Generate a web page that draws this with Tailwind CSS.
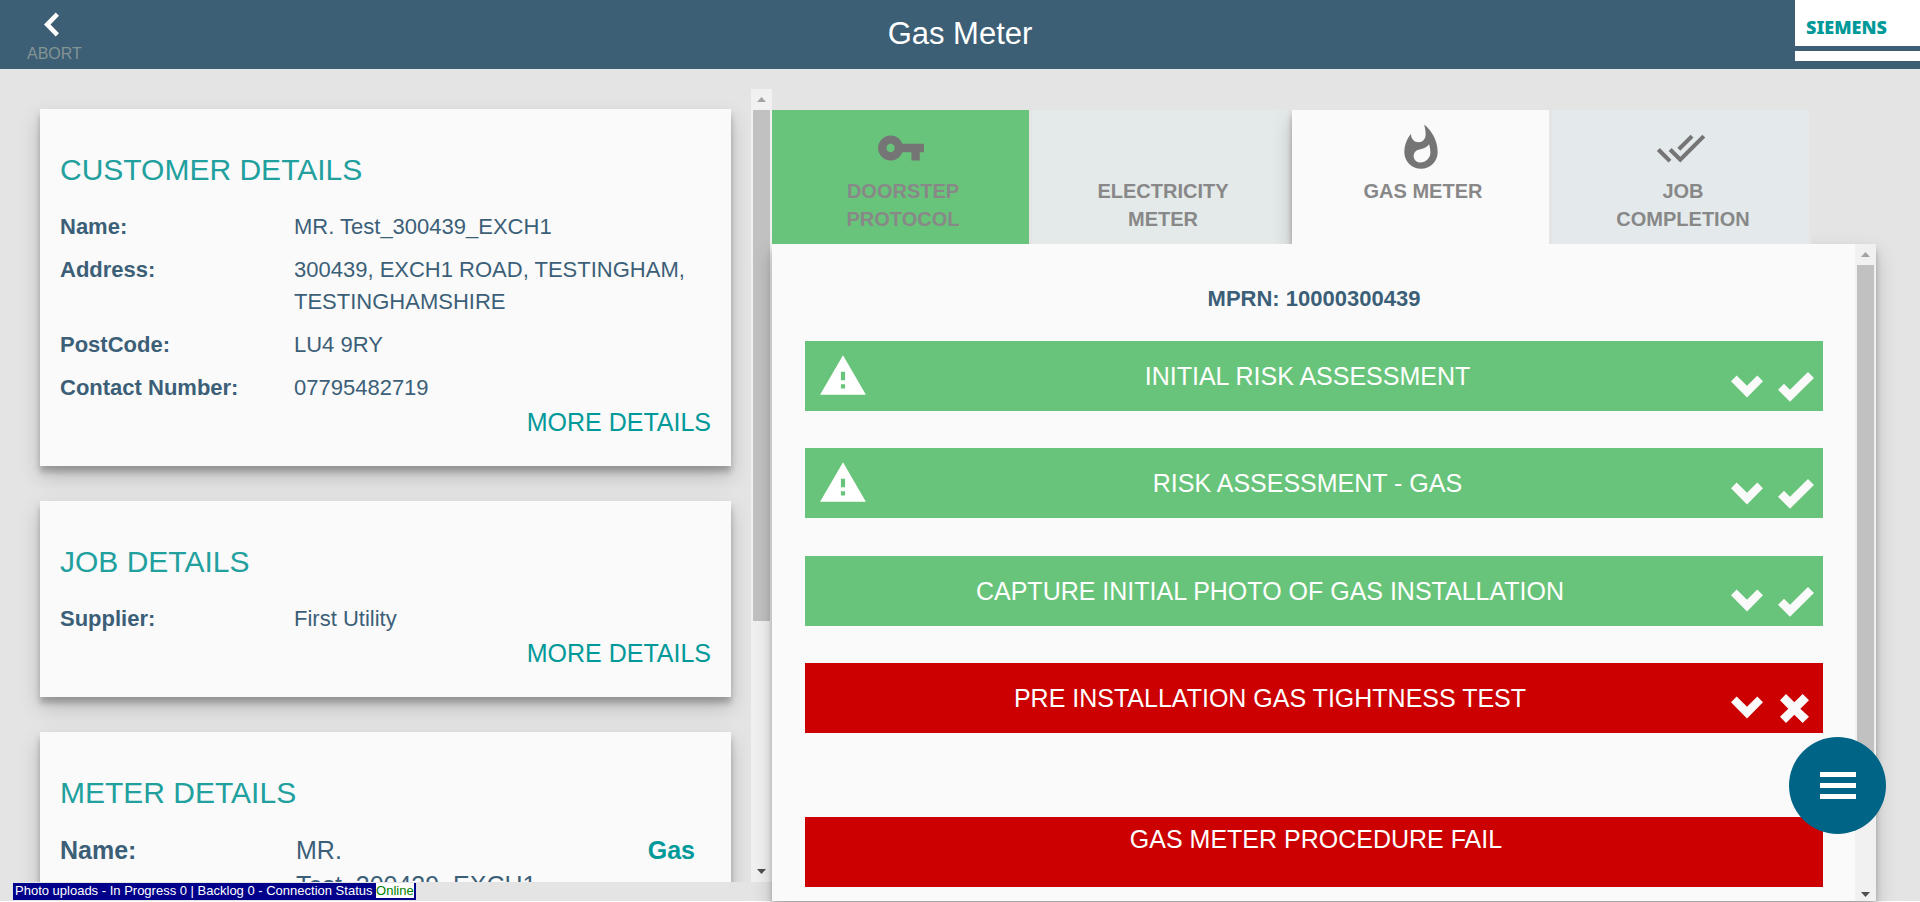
<!DOCTYPE html>
<html lang="en">
<head>
<meta charset="utf-8">
<meta name="viewport" content="width=device-width, initial-scale=1">
<title>Gas Meter</title>
<script src="https://cdn.jsdelivr.net/npm/@tailwindcss/browser@4"></script>
</head>
<body class="bg-white font-['Liberation_Sans',Arial,sans-serif] text-[#3c5f78]">
<svg class="hidden" aria-hidden="true">
  <symbol id="warning" viewBox="0 0 24 24"><path d="M1 21h22L12 2 1 21zm12-3h-2v-2h2v2zm0-4h-2v-4h2v4z"/></symbol>
  <symbol id="chevron" viewBox="155 131 96 68"><path d="M155 149L172 132 203 163 234 132 251 149 203 198z"/></symbol>
  <symbol id="tick" viewBox="294 126 108 90"><path d="M294 179L312 161 330 179 384 126 402 144 330 215z"/></symbol>
  <symbol id="cross" viewBox="300 162 87 87"><path d="M318 162L343 187 368 162 387 181 361 206 387 230 368 249 343 224 318 249 300 230 325 206 300 181z"/></symbol>
  <symbol id="up" viewBox="0 0 9 5"><path d="M4.500 0L9 5H0z"/></symbol>
  <symbol id="down" viewBox="0 0 9 5"><path d="M4.500 5L0 0H9z"/></symbol>
</svg>

<div class="flex h-screen flex-col overflow-hidden pb-px">
  <div class="flex min-h-0 flex-1 flex-col bg-[#e4e4e4]">
    <header class="grid h-[69px] shrink-0 grid-cols-3 bg-[#3c5f76]">
      <button type="button" class="flex flex-col items-center gap-[7px] justify-self-start pt-3 pl-[27px] text-[16px] leading-5 text-[#849494]">
        <svg class="mr-[5px] h-[25px] w-[15px] fill-white" viewBox="132 35 46 74" aria-hidden="true"><path d="M168 35L178 45 152 72 178 99 168 109 132 72z"/></svg>
        ABORT
      </button>
      <h1 class="self-center pb-[2px] text-center text-[31px] leading-10 text-white">Gas Meter</h1>
      <div class="flex w-[125px] flex-col gap-[5px] justify-self-end">
        <div class="flex h-[46px] items-center bg-white pt-2 pl-[11px] font-['Noto_Sans','Open_Sans',sans-serif] text-[18px] leading-6 font-black text-[#009999]">SIEMENS</div>
        <div class="h-[10px] bg-white"></div>
      </div>
    </header>

    <div class="flex min-h-0 flex-1">
      <aside class="mt-5 mb-[19px] flex min-w-0 flex-[772] overflow-hidden">
        <div class="flex min-w-0 flex-1 flex-col gap-[35px] overflow-hidden pt-5 pr-5 pl-10">
          <section class="shrink-0 bg-[#fafafa] px-5 pt-[43px] pb-[26px] shadow-[0_10px_20px_rgba(0,0,0,.19),0_6px_6px_rgba(0,0,0,.23)]">
            <h2 class="text-[30px] leading-9 text-[#21a09e]">CUSTOMER DETAILS</h2>
            <dl class="mt-[23px] grid grid-cols-[234fr_417fr] gap-y-[11px] text-[22px] leading-8">
              <dt class="font-bold">Name:</dt><dd>MR. Test_300439_EXCH1</dd>
              <dt class="font-bold">Address:</dt><dd>300439, EXCH1 ROAD, TESTINGHAM, TESTINGHAMSHIRE</dd>
              <dt class="font-bold">PostCode:</dt><dd>LU4 9RY</dd>
              <dt class="font-bold">Contact Number:</dt><dd>07795482719</dd>
            </dl>
            <a href="#" class="block text-right text-[25px] leading-9 text-[#009999]">MORE DETAILS</a>
          </section>
          <section class="shrink-0 bg-[#fafafa] px-5 pt-[43px] pb-[26px] shadow-[0_10px_20px_rgba(0,0,0,.19),0_6px_6px_rgba(0,0,0,.23)]">
            <h2 class="text-[30px] leading-9 text-[#21a09e]">JOB DETAILS</h2>
            <dl class="mt-[23px] grid grid-cols-[234fr_417fr] text-[22px] leading-8">
              <dt class="font-bold">Supplier:</dt><dd>First Utility</dd>
            </dl>
            <a href="#" class="block text-right text-[25px] leading-9 text-[#009999]">MORE DETAILS</a>
          </section>
          <section class="shrink-0 bg-[#fafafa] px-5 pt-[43px] pb-[26px] shadow-[0_10px_20px_rgba(0,0,0,.19),0_6px_6px_rgba(0,0,0,.23)]">
            <h2 class="text-[30px] leading-9 text-[#21a09e]">METER DETAILS</h2>
            <div class="mt-[22px] grid grid-cols-[236fr_260fr_155fr] text-[25px] leading-[35px]">
              <div class="font-bold">Name:</div>
              <div>MR. Test_300439_EXCH1</div>
              <div class="pr-4 text-right font-bold text-[#009999]">Gas</div>
            </div>
          </section>
        </div>
        <div class="flex w-[21px] shrink-0 flex-col items-center bg-[#f1f1f1]" aria-hidden="true">
          <div class="flex h-[21px] items-center"><svg class="h-[5px] w-[9px] fill-[#a3a3a3]"><use href="#up"/></svg></div>
          <div class="flex w-full flex-1 flex-col items-center">
            <div class="w-[17px] flex-[511] bg-[#c1c1c1]"></div>
            <div class="flex-[240]"></div>
          </div>
          <div class="flex h-[21px] items-center"><svg class="h-[5px] w-[9px] fill-[#505050]"><use href="#down"/></svg></div>
        </div>
      </aside>

      <main class="flex min-w-0 flex-[1104] flex-col pt-[41px] pr-11">
        <nav class="relative z-10 flex h-[134px] shrink-0 overflow-hidden pr-16 text-[20px] leading-7 font-bold text-[#888888]">
          <button type="button" class="flex flex-1 flex-col items-center gap-1 border-r-3 border-[#e4e4e4] bg-[#68c47a] pt-[13px]">
            <svg class="size-[50px] fill-[#757575]" viewBox="0 0 24 24" aria-hidden="true"><path d="M12.65 10C11.83 7.67 9.61 6 7 6c-3.310 0-6 2.690-6 6s2.690 6 6 6c2.610 0 4.830-1.670 5.650-4H17v4h4v-4h2v-4H12.650zM7 14c-1.100 0-2-.9-2-2s.9-2 2-2 2 .9 2 2-.9 2-2 2z"/></svg>
            <span class="pl-[5px]">DOORSTEP<br>PROTOCOL</span>
          </button>
          <button type="button" class="flex flex-1 flex-col items-center gap-1 border-r-3 border-[#e4e4e4] bg-[#e4eaea] pt-[13px]">
            <span class="size-[50px]"></span>
            <span class="pl-[5px]">ELECTRICITY<br>METER</span>
          </button>
          <button type="button" class="flex flex-1 flex-col items-center gap-1 border-r-3 border-[#e4e4e4] bg-[#fafafa] pt-[13px] shadow-[0_10px_20px_rgba(0,0,0,.19),0_6px_6px_rgba(0,0,0,.23)]">
            <svg class="size-[50px] fill-[#757575]" viewBox="0 0 24 24" aria-hidden="true"><path d="M13.5.67s.74 2.650.74 4.800c0 2.060-1.350 3.730-3.410 3.730-2.070 0-3.630-1.670-3.630-3.730l.03-.36C5.210 7.510 4 10.620 4 14c0 4.420 3.580 8 8 8s8-3.580 8-8C20 8.610 17.410 3.800 13.500.67zM11.710 19c-1.780 0-3.220-1.400-3.220-3.140 0-1.620 1.050-2.760 2.810-3.120 1.770-.36 3.600-1.210 4.620-2.580.39 1.290.59 2.650.59 4.040 0 2.650-2.150 4.800-4.800 4.800z"/></svg>
            <span class="pl-[5px]">GAS METER</span>
          </button>
          <button type="button" class="relative flex flex-1 flex-col items-center gap-1 border-r-3 border-[#e4e4e4] bg-[#e4eaec] pt-[13px]">
            <svg class="size-[50px] fill-[#757575]" viewBox="0 0 24 24" aria-hidden="true"><path d="M18 7l-1.410-1.410-6.340 6.340 1.410 1.410L18 7zm4.240-1.410L11.660 16.170 7.480 12l-1.410 1.410L11.660 19l12-12-1.420-1.410zM.41 13.410L6 19l1.410-1.410L1.830 12 .41 13.410z"/></svg>
            <span class="pl-[5px]">JOB<br>COMPLETION</span>
          </button>
        </nav>

        <div class="flex min-h-0 flex-1 bg-[#fafafa] shadow-[0_10px_20px_rgba(0,0,0,.19),0_6px_6px_rgba(0,0,0,.23)]">
          <div class="min-w-0 flex-1 overflow-hidden pt-[39px] pr-8 pl-[33px] text-[25px] leading-8 text-white">
            <p class="text-center text-[22px] font-bold text-[#3c5f78]">MPRN: 10000300439</p>
            <div class="mt-[26px] flex h-[392px] flex-col justify-between">
              <div class="flex h-[70px] items-center bg-[#68c47a]">
                <div class="w-[75px] pl-[13px]"><svg class="size-[50px] fill-white" aria-hidden="true"><use href="#warning"/></svg></div>
                <span class="flex-1 pl-1 text-center">INITIAL RISK ASSESSMENT</span>
                <button type="button" aria-label="Expand, completed" class="flex w-[92px] items-center gap-[15px] pt-[22px]">
                  <svg class="mb-[2px] h-[23px] w-8 fill-[#fafafa]"><use href="#chevron"/></svg><svg class="h-[30px] w-9 fill-[#fafafa]"><use href="#tick"/></svg>
                </button>
              </div>
              <div class="flex h-[70px] items-center bg-[#68c47a]">
                <div class="w-[75px] pl-[13px]"><svg class="size-[50px] fill-white" aria-hidden="true"><use href="#warning"/></svg></div>
                <span class="flex-1 pl-1 text-center">RISK ASSESSMENT - GAS</span>
                <button type="button" aria-label="Expand, completed" class="flex w-[92px] items-center gap-[15px] pt-[22px]">
                  <svg class="mb-[2px] h-[23px] w-8 fill-[#fafafa]"><use href="#chevron"/></svg><svg class="h-[30px] w-9 fill-[#fafafa]"><use href="#tick"/></svg>
                </button>
              </div>
              <div class="flex h-[70px] items-center bg-[#68c47a]">
                <span class="flex-1 pl-1 text-center">CAPTURE INITIAL PHOTO OF GAS INSTALLATION</span>
                <button type="button" aria-label="Expand, completed" class="flex w-[92px] items-center gap-[15px] pt-[22px]">
                  <svg class="mb-[2px] h-[23px] w-8 fill-[#fafafa]"><use href="#chevron"/></svg><svg class="h-[30px] w-9 fill-[#fafafa]"><use href="#tick"/></svg>
                </button>
              </div>
              <div class="flex h-[70px] items-center bg-[#cc0000]">
                <span class="flex-1 pl-1 text-center">PRE INSTALLATION GAS TIGHTNESS TEST</span>
                <button type="button" aria-label="Expand, failed" class="flex w-[92px] items-center gap-[15px] pt-[22px]">
                  <svg class="mb-[2px] h-[23px] w-8 fill-[#fafafa]"><use href="#chevron"/></svg><svg class="h-[29px] w-[33px] fill-[#fafafa]"><use href="#cross"/></svg>
                </button>
              </div>
            </div>
            <button type="button" class="mt-[84px] flex h-[70px] w-full justify-center bg-[#cc0000] pt-[6px] pl-1">GAS METER PROCEDURE FAIL</button>
          </div>
          <div class="flex w-[21px] shrink-0 flex-col items-center bg-[#f1f1f1]" aria-hidden="true">
            <div class="flex h-[21px] items-center"><svg class="h-[5px] w-[9px] fill-[#a3a3a3]"><use href="#up"/></svg></div>
            <div class="flex w-full flex-1 flex-col items-center">
              <div class="w-[17px] flex-[510] bg-[#c1c1c1]"></div>
              <div class="flex-[105]"></div>
            </div>
            <div class="flex h-[21px] items-center pt-2"><svg class="h-[5px] w-[9px] fill-[#505050]"><use href="#down"/></svg></div>
          </div>
        </div>
      </main>
    </div>
  </div>
</div>

<div class="fixed bottom-[2px] left-[13px] bg-[#00008b] px-[2px] pb-px text-[13px] leading-4 text-white">Photo uploads - In Progress 0 | Backlog 0 - Connection Status <span class="bg-white text-[#008000]">Online</span></div>

<button type="button" aria-label="Menu" class="fixed right-[34px] bottom-[68px] z-20 flex size-[97px] items-center justify-center rounded-full bg-[#006487]">
  <svg class="h-[27px] w-9 fill-white" viewBox="0 0 36 27"><path d="M0 0h36v5H0zM0 11h36v5H0zM0 22h36v5H0z"/></svg>
</button>
</body>
</html>
